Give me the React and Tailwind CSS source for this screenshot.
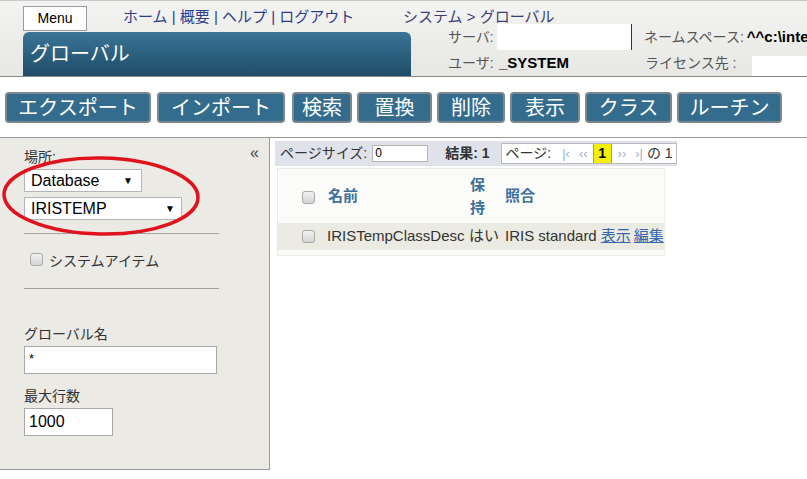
import React from "react";

const FONT = { fontFamily: '"Liberation Sans", "Noto Sans CJK JP", sans-serif' };

function Check() {
  return (
    <span className="inline-block w-[13px] h-[13px] rounded-[3px] border border-[#a9a9a9] bg-gradient-to-b from-[#f2f2f2] to-[#d4d4d4] shrink-0" />
  );
}

function Btn({ children, w, ml }) {
  return (
    <div
      className={`h-[31px] ${w} ${ml} shrink-0 flex items-center justify-center rounded-[4px] border-2 border-[#7c878d] bg-[#346c8d] text-white text-[20px] leading-none`}
    >
      {children}
    </div>
  );
}

export default function App() {
  return (
    <div className="relative w-[807px] h-[479px] overflow-hidden bg-white text-[#333]" style={FONT}>
      {/* Header */}
      <div className="h-[77px] flex border-t border-[#c9c9c9] border-b border-b-[#8c8c8c] bg-gradient-to-b from-[#f3f3f1] to-[#e7e7e4]">
        <div className="w-[425px] pl-[23px] pt-[4px] shrink-0 flex flex-col">
          <div className="flex items-center h-[26px] whitespace-nowrap">
            <div className="w-[64px] h-[25px] shrink-0 bg-white border border-[#9a9a9a] flex items-center justify-center text-[14px] text-black">
              Menu
            </div>
            <div className="w-[280px] shrink-0 ml-[36px] text-[15px] text-[#2e3c8c] mt-[-2px]">
              ホーム | 概要 | ヘルプ | ログアウト
            </div>
            <div className="shrink-0 text-[15px] text-[#3c3f72] mt-[-2px]">
              システム &gt; グローバル
            </div>
          </div>
          <div className="mt-[1px] w-[388px] h-[44px] rounded-t-[6px] bg-gradient-to-b from-[#3a7597] to-[#1f4c68] flex items-center pl-[7px] text-white text-[20px]">
            グローバル
          </div>
        </div>
        <div className="flex-1 min-w-0 overflow-hidden pl-[23px] pt-[23px] text-[14px] text-[#555] whitespace-nowrap">
          <div className="flex h-[26px] items-center">
            <span className="w-[49px] shrink-0">サーバ:</span>
            <span className="w-[135px] shrink-0 h-[26px] bg-white border-r border-[#333]" />
            <span className="ml-[12px] shrink-0">ネームスペース:</span>
            <span className="ml-[3px] shrink-0 font-bold text-black text-[15px]">^^c:\intersystems\iris\mgr\iristemp\</span>
          </div>
          <div className="flex h-[26px] items-center">
            <span className="w-[51px] shrink-0">ユーザ:</span>
            <span className="w-[134px] shrink-0 font-bold text-black text-[15px]">_SYSTEM</span>
            <span className="ml-[12px] shrink-0">ライセンス先 :</span>
            <span className="ml-[15px] flex-1 h-[20px] mt-[6px] bg-white" />
          </div>
        </div>
      </div>

      {/* Buttons */}
      <div className="flex mt-[15px]">
        <Btn w="w-[146px]" ml="ml-[5px]">エクスポート</Btn>
        <Btn w="w-[128px]" ml="ml-[6px]">インポート</Btn>
        <Btn w="w-[60px]" ml="ml-[7px]">検索</Btn>
        <Btn w="w-[75px]" ml="ml-[5px]">置換</Btn>
        <Btn w="w-[68px]" ml="ml-[5px]">削除</Btn>
        <Btn w="w-[70px]" ml="ml-[5px]">表示</Btn>
        <Btn w="w-[87px]" ml="ml-[5px]">クラス</Btn>
        <Btn w="w-[105px]" ml="ml-[5px]">ルーチン</Btn>
      </div>

      {/* Body */}
      <div className="mt-[14px] border-t border-[#9a9a9a] flex">
        {/* Left panel */}
        <div className="relative w-[270px] h-[332px] shrink-0 bg-[#ebeae5] border-r border-b border-[#9a9a9a] pl-[24px] pt-[10px] text-[14px] text-[#333]">
          <div className="absolute right-[10px] top-[3px] text-[16px] text-[#444]">«</div>
          <div className="h-[18px] leading-[18px]">場所:</div>
          <div className="mt-[3px] w-[118px] h-[23px] bg-white border border-[#b5b5b5] flex items-center justify-between pl-[6px] pr-[8px] text-[16px] text-black">
            <span>Database</span>
            <span className="text-[10px]">▼</span>
          </div>
          <div className="mt-[5px] w-[158px] h-[23px] bg-white border border-[#b5b5b5] flex items-center justify-between pl-[6px] pr-[6px] text-[16px] text-black">
            <span>IRISTEMP</span>
            <span className="text-[10px]">▼</span>
          </div>
          <div className="mt-[13px] w-[195px] border-t border-[#a5a5a5]" />
          <div className="mt-[16px] flex items-center pl-[6px] h-[18px]">
            <Check />
            <span className="ml-[6px] mt-[5px]">システムアイテム</span>
          </div>
          <div className="mt-[20px] w-[195px] border-t border-[#a5a5a5]" />
          <div className="mt-[36px] h-[18px] leading-[18px]">グローバル名</div>
          <div className="mt-[3px] w-[193px] h-[28px] bg-white border border-[#a8a8a8] pl-[4px] pt-[2px] text-[13px] text-black">
            *
          </div>
          <div className="mt-[13px] h-[18px] leading-[18px]">最大行数</div>
          <div className="mt-[3px] w-[89px] h-[28px] bg-white border border-[#a8a8a8] pl-[4px] flex items-center text-[16px] text-black">
            1000
          </div>

          {/* red ellipse annotation */}
          <svg className="absolute left-0 top-[16px] pointer-events-none" width="205" height="86" viewBox="0 0 205 86">
            <ellipse cx="101" cy="42" rx="97" ry="38" fill="none" stroke="#e0121c" strokeWidth="3.5" transform="rotate(1 101 42)" />
          </svg>
        </div>

        {/* Right content */}
        <div className="pl-[5px] pt-[3px]">
          <div className="w-[402px] h-[25px] bg-[#dfe3e9] flex items-center pl-[5px] text-[14px] text-[#333] whitespace-nowrap">
            <span>ページサイズ:</span>
            <span className="ml-[5px] w-[56px] h-[17px] bg-white border border-[#b5b5b5] text-[12px] leading-[15px] pl-[2px] text-black">0</span>
            <span className="ml-[17px] font-bold">結果: 1</span>
            <div className="ml-[11px] h-[21px] flex-1 bg-white border border-[#b9b9b9] flex items-center pl-[4px] text-[14px]">
              <span>ページ:</span>
              <span className="ml-[11px] text-[#9db0c4] text-[13px]">|‹</span>
              <span className="ml-[9px] text-[#9db0c4] text-[13px]">‹‹</span>
              <span className="ml-[5px] w-[19px] h-[19px] bg-[#f3ee0a] border-x border-[#b9a800] flex items-center justify-center font-bold text-black">1</span>
              <span className="ml-[6px] text-[#9db0c4] text-[13px]">››</span>
              <span className="ml-[9px] text-[#9db0c4] text-[13px]">›|</span>
              <span className="ml-[4px]">の 1</span>
            </div>
          </div>

          <div className="ml-[2px] mt-[2px] w-[388px] bg-[#fbfbf9] border border-[#ebebe6] pb-[5px] text-[15px] whitespace-nowrap">
            <div className="flex h-[54px] items-center font-bold text-[#3d6e9c]">
              <div className="w-[45px] pl-[24px] flex items-center pt-[2px]"><Check /></div>
              <div className="w-[146px] pl-[5px]">名前</div>
              <div className="w-[34px] pl-[1px] leading-[23px] flex flex-col">
                <span>保</span>
                <span>持</span>
              </div>
              <div className="pl-[2px]">照合</div>
            </div>
            <div className="flex h-[27px] items-center bg-[#ecebe3] text-[#333]">
              <div className="w-[45px] pl-[24px] flex items-center"><Check /></div>
              <div className="w-[144px] pl-[4px]">IRISTempClassDesc</div>
              <div className="w-[36px] pl-[2px]">はい</div>
              <div className="pl-[2px]">IRIS standard</div>
              <div className="ml-[4px] text-[#3366aa] underline">表示</div>
              <div className="ml-[3px] text-[#3366aa] underline">編集</div>
            </div>
          </div>
        </div>
      </div>
    </div>
  );
}
